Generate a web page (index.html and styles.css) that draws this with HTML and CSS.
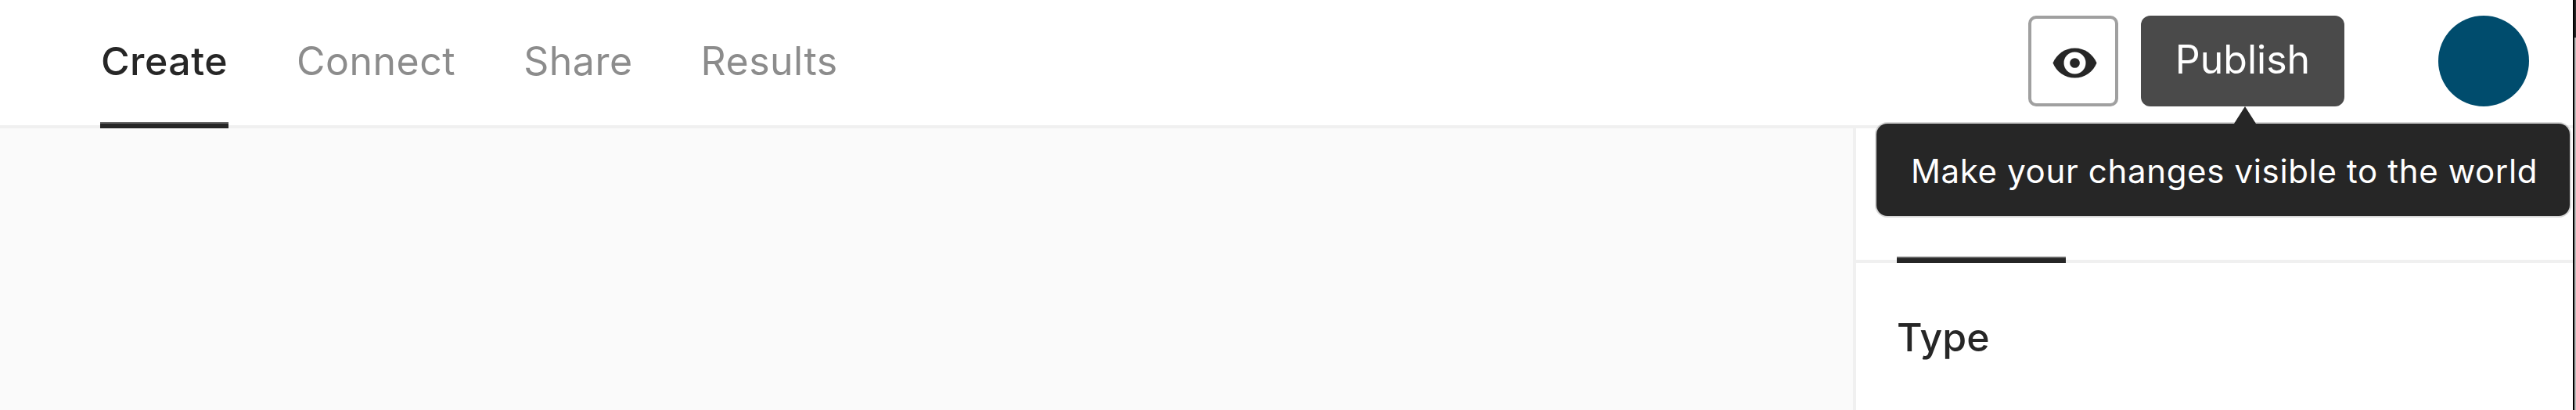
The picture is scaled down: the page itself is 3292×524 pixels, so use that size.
FILE: index.html
```html
<!DOCTYPE html>
<html lang="en">
<head>
<meta charset="utf-8">
<title>Form editor</title>
<link rel="stylesheet" href="styles.css">
</head>
<body>
<div class="app">
  <header class="topbar">
    <nav class="tabs">
      <a class="tab tab-active">Create</a>
      <a class="tab">Connect</a>
      <a class="tab">Share</a>
      <a class="tab">Results</a>
    </nav>
    <div class="actions">
      <button class="preview" aria-label="Preview">
        <svg class="eye" viewBox="0 0 24 24" width="61" height="61">
          <path class="eye-shape" d="M12 4.5C7 4.5 2.73 7.61 1 12c1.73 4.39 6 7.5 11 7.5s9.27-3.11 11-7.5c-1.73-4.39-6-7.5-11-7.5z"/>
          <circle class="eye-ring" cx="12" cy="12" r="5.5"/>
          <circle class="eye-shape" cx="12" cy="12" r="2.5"/>
        </svg>
      </button>
      <button class="publish">Publish</button>
      <div class="avatar"></div>
    </div>
    <div class="tooltip">
      <span class="tooltip-arrow"></span>
      Make your changes visible to the world
    </div>
  </header>
  <main class="body">
    <div class="canvas"></div>
    <aside class="panel">
      <div class="panel-tabs"><span class="panel-tab"></span></div>
      <h2 class="panel-heading">Type</h2>
    </aside>
  </main>
</div>
<div class="edge"></div>
</body>
</html>
```
FILE: styles.css
```css
* { box-sizing: border-box; }
html, body { margin: 0; height: 100%; overflow: hidden; }
body {
  display: flex;
  background: #fff;
  font-family: Inter, "Liberation Sans", sans-serif;
  color: #262626;
}
.app { flex: 1; display: flex; flex-direction: column; min-width: 0; }
.edge {
  width: 4px;
  flex: none;
  background: linear-gradient(to right, #000 0 2px, #262626 2px 4px) top / 100% 48px no-repeat,
              linear-gradient(to right, #000 0 2px, #b8b8b8 2px 4px);
}
.topbar {
  position: relative;
  flex: none;
  height: 164px;
  border-bottom: 4px solid #f0f0f0;
  display: flex;
  justify-content: space-between;
  padding: 0 56px 0 128px;
}
.tabs { display: flex; gap: 87px; }
.tab {
  font-size: 50px;
  letter-spacing: 0.5px;
  line-height: 156px;
  height: 164px;
  color: #8c8c8c;
}
.tab-active {
  width: 164px;
  text-align: center;
  font-weight: 500;
  color: #262626;
  background: linear-gradient(#666 0 2px, #262626 2px) bottom / 100% 8px no-repeat;
}
.actions { display: flex; align-items: flex-start; padding-top: 20px; }
.preview {
  width: 115px;
  height: 116px;
  padding: 5px 0 0 4px;
  border: 4px solid #a0a0a0;
  border-radius: 10px;
  background: #fff;
  display: flex;
  align-items: center;
  justify-content: center;
}
.eye { display: block; flex: none; }
.eye-shape { fill: #262626; }
.eye-ring { fill: #fff; }
.publish {
  width: 260px;
  height: 116px;
  margin-left: 29px;
  border: 0;
  border-radius: 12px;
  background: #4a4a4a;
  color: #fff;
  font: 400 50px Inter, "Liberation Sans", sans-serif;
  padding: 0 0 4px;
}
.avatar {
  width: 116px;
  height: 116px;
  margin-left: 120px;
  border-radius: 50%;
  background: #004c6d;
}
.tooltip {
  position: absolute;
  left: 2398px;
  top: 158px;
  width: 886px;
  height: 118px;
  padding-left: 44px;
  background: #262626;
  box-shadow: 0 0 0 2px rgba(0, 0, 0, 0.16);
  border-radius: 14px;
  color: #fff;
  font-size: 42px;
  letter-spacing: 0.65px;
  line-height: 122px;
  white-space: nowrap;
}
.tooltip-arrow {
  position: absolute;
  left: 457px;
  top: -22px;
  width: 28px;
  height: 22px;
  background: #262626;
  clip-path: polygon(50% 0, 100% 100%, 0 100%);
}
.body { flex: 1; display: flex; min-height: 0; }
.canvas { flex: 1; background: #fafafa; }
.panel {
  width: 920px;
  flex: none;
  background: #fff;
  border-left: 4px solid #f0f0f0;
}
.panel-tabs {
  height: 172px;
  border-bottom: 4px solid #f0f0f0;
  padding-left: 52px;
}
.panel-tab {
  display: block;
  width: 216px;
  height: 172px;
  background: linear-gradient(#666 0 2px, #262626 2px) bottom / 100% 8px no-repeat;
}
.panel-heading {
  margin: 66px 0 0 52px;
  font-size: 50px;
  font-weight: 500;
  line-height: 58px;
}
```
